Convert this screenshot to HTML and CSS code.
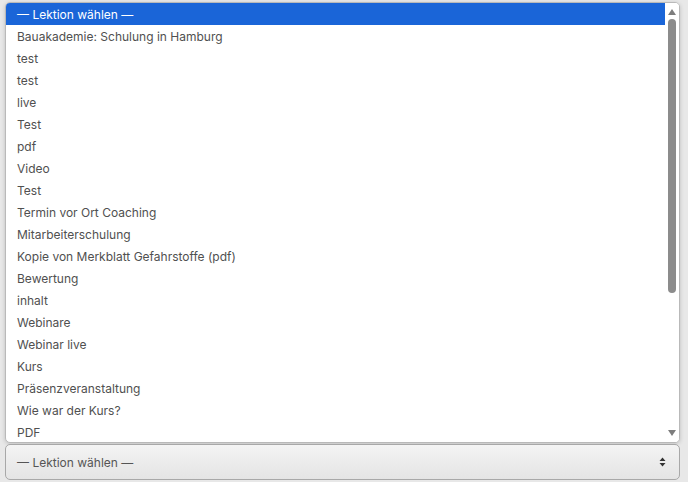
FILE: index.html
```html
<!DOCTYPE html>
<html lang="de">
<head>
<meta charset="utf-8">
<title>Lektion wählen</title>
<link rel="stylesheet" href="styles.css">
</head>
<body>
<div class="page">
  <div class="popup">
    <ul class="options">
      <li class="opt selected">— Lektion wählen —</li>
      <li class="opt">Bauakademie: Schulung in Hamburg</li>
      <li class="opt">test</li>
      <li class="opt">test</li>
      <li class="opt">live</li>
      <li class="opt">Test</li>
      <li class="opt">pdf</li>
      <li class="opt">Video</li>
      <li class="opt">Test</li>
      <li class="opt">Termin vor Ort Coaching</li>
      <li class="opt">Mitarbeiterschulung</li>
      <li class="opt">Kopie von Merkblatt Gefahrstoffe (pdf)</li>
      <li class="opt">Bewertung</li>
      <li class="opt">inhalt</li>
      <li class="opt">Webinare</li>
      <li class="opt">Webinar live</li>
      <li class="opt">Kurs</li>
      <li class="opt">Präsenzveranstaltung</li>
      <li class="opt">Wie war der Kurs?</li>
      <li class="opt">PDF</li>
    </ul>
    <div class="scrollbar">
      <div class="arrow up"></div>
      <div class="track"><div class="thumb"></div></div>
      <div class="arrow down"></div>
    </div>
  </div>
  <div class="select">
    <span class="select-label">— Lektion wählen —</span>
    <svg class="select-icon" width="7" height="10" viewBox="0 0 7 10"><path d="M3.5 0.5 L6.5 4 H0.5 Z M3.5 9.5 L6.5 6 H0.5 Z" fill="#333"/></svg>
  </div>
</div>
</body>
</html>
```
FILE: styles.css
```css
html, body {
  margin: 0;
  padding: 0;
}
body {
  background: #e8e8e8;
  font-family: Inter, "Noto Sans", sans-serif;
  font-size: 12px;
  color: #505050;
}
.page {
  padding: 2px 8px 0 5px;
  display: flex;
  flex-direction: column;
  gap: 1px;
}
.popup {
  height: 439px;
  background: #fff;
  border: 1px solid #b9b9b9;
  border-radius: 5px;
  box-shadow: 0 1px 4px rgba(0,0,0,0.18);
  display: flex;
  overflow: hidden;
}
.options {
  list-style: none;
  margin: 0;
  padding: 0;
  flex: 1;
  overflow: hidden;
}
.opt {
  box-sizing: border-box;
  height: 22px;
  padding-top: 1px;
  line-height: 21px;
  padding-left: 11px;
  white-space: nowrap;
}
.opt.selected {
  background: #1a65d8;
  color: #fff;
}
.scrollbar {
  width: 14px;
  display: flex;
  flex-direction: column;
  align-items: center;
  background: #fff;
}
.arrow {
  width: 0;
  height: 0;
  border-left: 4px solid transparent;
  border-right: 4px solid transparent;
  margin: 6px 0 4px;
}
.arrow.up {
  border-bottom: 6px solid #7d7d7d;
}
.arrow.down {
  border-top: 6px solid #7d7d7d;
  margin: 4px 0 6px;
}
.track {
  flex: 1;
  width: 8px;
}
.thumb {
  height: 274px;
  background: #8c8c8c;
  border-radius: 4px;
}
.select {
  height: 34px;
  border: 1px solid #a8a8a8;
  border-radius: 5px;
  background: linear-gradient(#f4f4f4, #e4e4e4);
  display: flex;
  align-items: center;
  justify-content: space-between;
  padding: 0 13px 0 11px;
  color: #555;
}
.select-icon {
  display: block;
}
```
